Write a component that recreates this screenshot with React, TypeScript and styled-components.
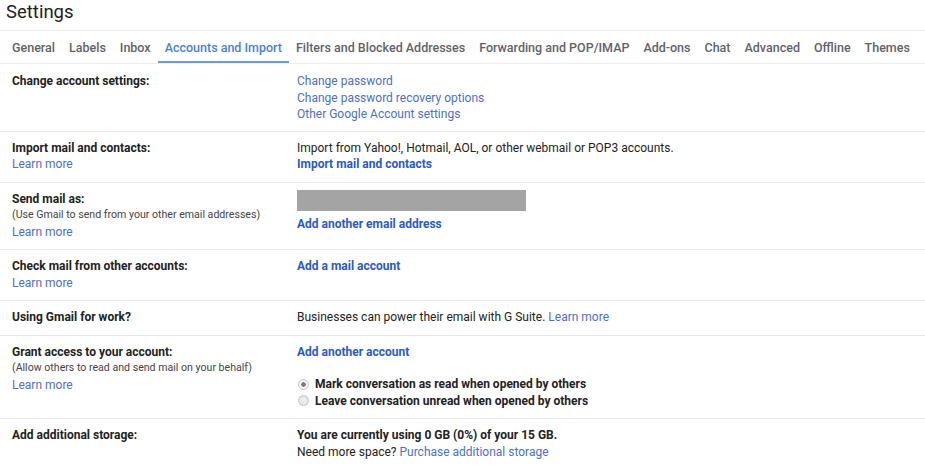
import React from 'react';
import styled, { createGlobalStyle } from 'styled-components';

const GlobalStyle = createGlobalStyle`
  html, body {
    margin: 0;
    padding: 0;
    background: #fff;
  }
  body {
    font-family: Roboto, Arial, sans-serif;
    color: #222;
  }
`;

const Page = styled.div`
  width: 925px;
  min-height: 476px;
  background: #fff;
`;

const Header = styled.div`
  height: 31px;
  border-bottom: 1px solid #f1f1f1;
  padding-left: 6px;
  box-sizing: border-box;
`;

const Title = styled.h1`
  margin: 0;
  font-size: 18.5px;
  font-weight: 400;
  color: #202124;
  line-height: 24px;
`;

const TabBar = styled.nav`
  display: flex;
  height: 32px;
  padding-left: 5px;
  border-bottom: 1px solid #ededed;
`;

const Tab = styled.div<{ $active?: boolean }>`
  padding: 3px 7px 0;
  font-size: 12.5px;
  font-weight: 500;
  line-height: 27px;
  color: ${(p) => (p.$active ? '#4a7fd6' : '#5f6368')};
  border-bottom: 2px solid ${(p) => (p.$active ? '#6a9be2' : 'transparent')};
  white-space: nowrap;
`;

const Rows = styled.div`
  display: flex;
  flex-direction: column;
`;

const Row = styled.div<{ $pad?: string }>`
  display: grid;
  grid-template-columns: 285px 1fr;
  padding: ${(p) => p.$pad || '8px 0 9px 12px'};
  border-bottom: 1px solid #e6e6e6;
  font-size: 12px;
  line-height: 16.5px;

  &:last-child {
    border-bottom: none;
  }
`;

const Cell = styled.div`
  display: flex;
  flex-direction: column;
  align-items: flex-start;
`;

const Label = styled.div`
  font-weight: 700;
  color: #222;
`;

const Note = styled.div`
  font-size: 10.6px;
  color: #444;
`;

const Link = styled.a<{ $bold?: boolean }>`
  color: ${(p) => (p.$bold ? '#2b59c3' : '#4d6fc4')};
  font-weight: ${(p) => (p.$bold ? 700 : 400)};
  text-decoration: none;
  cursor: pointer;
`;

const Text = styled.div<{ $bold?: boolean }>`
  color: #222;
  font-weight: ${(p) => (p.$bold ? 700 : 400)};
`;

const Redacted = styled.div`
  width: 229px;
  height: 21px;
  background: #a4a4a4;
  margin: -1px 0 5px;
`;

const Spacer = styled.div<{ $h: number }>`
  height: ${(p) => p.$h}px;
`;

const RadioLine = styled.label`
  display: flex;
  align-items: center;
  gap: 6px;
  font-weight: 700;
  color: #222;
  padding-left: 1px;
`;

const Radio = styled.span<{ $checked?: boolean }>`
  width: 9px;
  height: 9px;
  border-radius: 50%;
  border: 1px solid #c4c4c4;
  background: radial-gradient(circle, ${(p) => (p.$checked ? '#7a7a7a 0 2px, #f3f3f3 2.5px' : '#eeeeee 0, #e2e2e2 100%')});
  box-sizing: content-box;
`;

const tabs = [
  'General',
  'Labels',
  'Inbox',
  'Accounts and Import',
  'Filters and Blocked Addresses',
  'Forwarding and POP/IMAP',
  'Add-ons',
  'Chat',
  'Advanced',
  'Offline',
  'Themes',
];

export default function App() {
  return (
    <Page>
      <GlobalStyle />
      <Header>
        <Title>Settings</Title>
      </Header>
      <TabBar>
        {tabs.map((t) => (
          <Tab key={t} $active={t === 'Accounts and Import'}>
            {t}
          </Tab>
        ))}
      </TabBar>
      <Rows>
        <Row $pad="9px 0 8px 12px">
          <Cell>
            <Label>Change account settings:</Label>
          </Cell>
          <Cell>
            <Link>Change password</Link>
            <Link>Change password recovery options</Link>
            <Link>Other Google Account settings</Link>
          </Cell>
        </Row>
        <Row>
          <Cell>
            <Label>Import mail and contacts:</Label>
            <Link>Learn more</Link>
          </Cell>
          <Cell>
            <Text>Import from Yahoo!, Hotmail, AOL, or other webmail or POP3 accounts.</Text>
            <Link $bold>Import mail and contacts</Link>
          </Cell>
        </Row>
        <Row>
          <Cell>
            <Label>Send mail as:</Label>
            <Note>(Use Gmail to send from your other email addresses)</Note>
            <Link>Learn more</Link>
          </Cell>
          <Cell>
            <Redacted />
            <Link $bold>Add another email address</Link>
          </Cell>
        </Row>
        <Row>
          <Cell>
            <Label>Check mail from other accounts:</Label>
            <Link>Learn more</Link>
          </Cell>
          <Cell>
            <Link $bold>Add a mail account</Link>
          </Cell>
        </Row>
        <Row>
          <Cell>
            <Label>Using Gmail for work?</Label>
          </Cell>
          <Cell>
            <Text>
              Businesses can power their email with G Suite. <Link>Learn more</Link>
            </Text>
          </Cell>
        </Row>
        <Row>
          <Cell>
            <Label>Grant access to your account:</Label>
            <Note>(Allow others to read and send mail on your behalf)</Note>
            <Link>Learn more</Link>
          </Cell>
          <Cell>
            <Link $bold>Add another account</Link>
            <Spacer $h={16} />
            <RadioLine>
              <Radio $checked />
              Mark conversation as read when opened by others
            </RadioLine>
            <RadioLine>
              <Radio />
              Leave conversation unread when opened by others
            </RadioLine>
          </Cell>
        </Row>
        <Row>
          <Cell>
            <Label>Add additional storage:</Label>
          </Cell>
          <Cell>
            <Text $bold>You are currently using 0 GB (0%) of your 15 GB.</Text>
            <Text>
              Need more space? <Link>Purchase additional storage</Link>
            </Text>
          </Cell>
        </Row>
      </Rows>
    </Page>
  );
}
